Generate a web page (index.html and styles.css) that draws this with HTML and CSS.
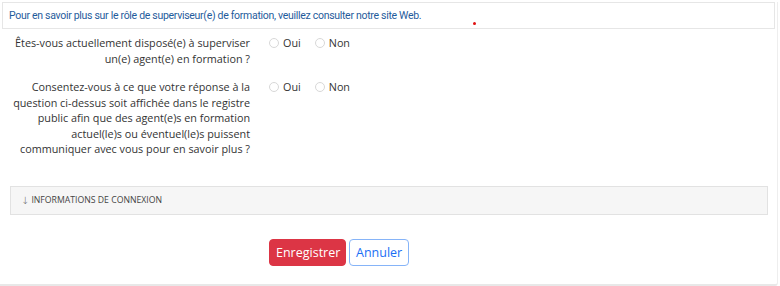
FILE: index.html
```html
<!DOCTYPE html>
<html lang="fr">
<head>
  <meta charset="UTF-8">
  <title>Superviseur(e) de formation</title>
  <link rel="stylesheet" href="styles.css">
</head>
<body>
  <div class="card">
    <div class="info-box">
      Pour en savoir plus sur le rôle de superviseur(e) de formation, veuillez consulter notre site Web.
      <span class="dot"></span>
    </div>

    <div class="form-row">
      <label class="q-label">Êtes-vous actuellement disposé(e) à superviser un(e) agent(e) en formation ?</label>
      <div class="options">
        <label class="opt"><input type="radio" name="q1"> Oui</label>
        <label class="opt"><input type="radio" name="q1"> Non</label>
      </div>
    </div>

    <div class="form-row">
      <label class="q-label">Consentez-vous à ce que votre réponse à la question ci-dessus soit affichée dans le registre public afin que des agent(e)s en formation actuel(le)s ou éventuel(le)s puissent communiquer avec vous pour en savoir plus ?</label>
      <div class="options">
        <label class="opt"><input type="radio" name="q2"> Oui</label>
        <label class="opt"><input type="radio" name="q2"> Non</label>
      </div>
    </div>

    <div class="collapse-bar"><span class="arrow">↓</span> INFORMATIONS DE CONNEXION</div>

    <div class="actions">
      <button class="btn btn-save">Enregistrer</button>
      <button class="btn btn-cancel">Annuler</button>
    </div>
  </div>
</body>
</html>
```

FILE: styles.css
```css
body {
  margin: 0;
  background: white;
  font-family: "Open Sans", Arial, sans-serif;
  color: #333;
}
.card {
  width: 778px;
  height: 284px;
  box-sizing: border-box;
  border-bottom: 2px solid #e8e8e8;
  border-right: 1px solid #eee;
  border-bottom-right-radius: 3px;
}
.info-box {
  position: relative;
  margin: 2px 2px 0 2px;
  padding: 6px 5px 6px 6px;
  border: 1px solid #e6e6e6;
  font-family: Roboto, Arial, sans-serif;
  font-size: 10.5px;
  letter-spacing: -0.3px;
  color: #1f5c9c;
  line-height: 13px;
}
.dot {
  position: absolute;
  left: 470px;
  top: 19px;
  width: 3px;
  height: 3px;
  border-radius: 50%;
  background: #e01010;
}
.form-row {
  display: flex;
  align-items: flex-start;
  margin-top: 6px;
}
.form-row + .form-row {
  margin-top: 13px;
}
.q-label {
  width: 240px;
  padding-left: 10px;
  padding-right: 18px;
  text-align: right;
  font-size: 10.8px;
  line-height: 15.5px;
  color: #333;
}
.options {
  display: flex;
  gap: 13px;
  font-size: 10.8px;
  line-height: 15.5px;
  color: #333;
}
.opt {
  display: flex;
  align-items: center;
  gap: 4px;
}
.opt input {
  appearance: none;
  width: 10px;
  height: 10px;
  margin: 0 0 0 1px;
  border: 1px solid #d8d8d8;
  border-radius: 50%;
  background: white;
}
.collapse-bar {
  margin: 29px 9px 0 10px;
  height: 27px;
  padding-left: 10px;
  display: flex;
  align-items: center;
  background: #f6f6f6;
  border: 1px solid #e2e2e2;
  font-size: 8.7px;
  color: #444;
}
.arrow {
  font-family: "DejaVu Sans", sans-serif;
  font-size: 10px;
  font-weight: 300;
  color: #666;
  margin-right: 2px;
}
.actions {
  display: flex;
  gap: 3px;
  margin-top: 24px;
  padding-left: 269px;
}
.btn {
  height: 27px;
  padding: 0 6px;
  border-radius: 4px;
  font-family: "Open Sans", Arial, sans-serif;
  font-size: 12.5px;
  cursor: pointer;
}
.btn-save {
  width: 77px;
  background: #dc3545;
  border: 1px solid #dc3545;
  color: white;
}
.btn-cancel {
  width: 60px;
  background: white;
  border: 1px solid #86b4f8;
  color: #1a6ef5;
}
```
